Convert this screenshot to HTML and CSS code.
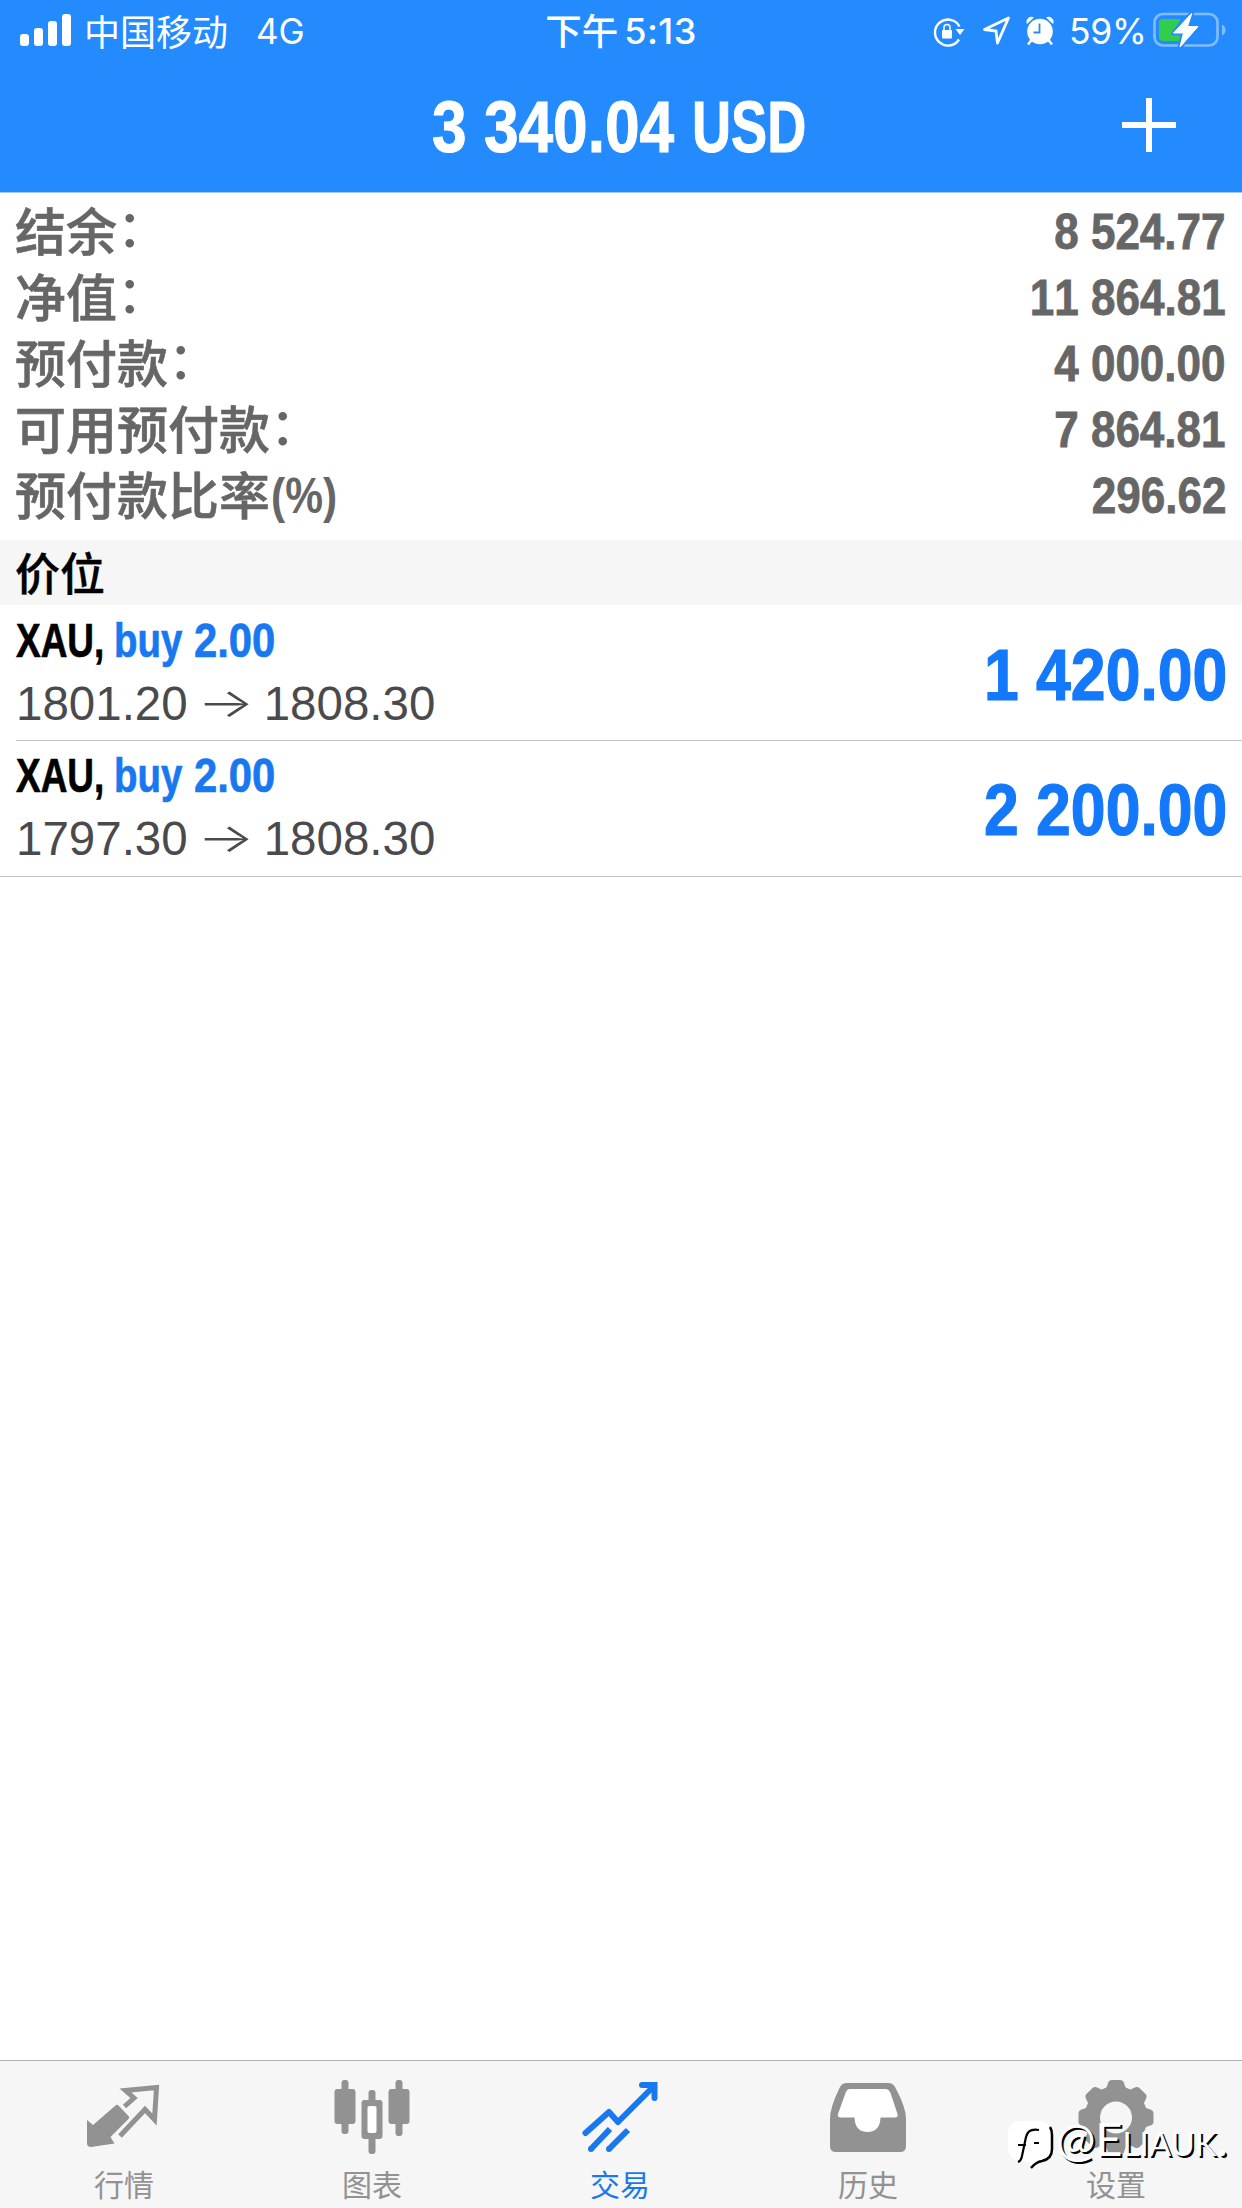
FILE: index.html
```html
<!DOCTYPE html>
<html lang="zh-CN">
<head>
<meta charset="utf-8">
<title>交易</title>
<link rel="stylesheet" href="styles.css">
</head>
<body>
<div class="app">
  <header class="header">
    <div class="status">
      <div class="status-left">
        <svg class="signal" width="52" height="33" viewBox="0 0 52 33" fill="#fff"><rect x="0" y="20" width="9" height="12" rx="3"/><rect x="14" y="14" width="9" height="18" rx="3"/><rect x="28" y="7" width="9" height="25" rx="3"/><rect x="42" y="0" width="9" height="32" rx="3"/></svg>
        <span class="carrier">中国移动</span>
        <span class="network">4G</span>
      </div>
      <div class="clock"><span class="clock-cjk">下午</span><span class="clock-time">5:13</span></div>
      <div class="status-right">
        <svg class="lock" width="32" height="30" viewBox="0 0 32 30" fill="none"><path d="M26.500 9.500A13 13 0 1 0 26 22.500" stroke="#fff" stroke-width="2.400"/><path d="M22.500 12h9l-4.500 6z" fill="#fff"/><rect x="9" y="13" width="10" height="8.500" rx="1" fill="#fff"/><path d="M11 13v-2.500a3 3 0 0 1 6 0V13" stroke="#fff" stroke-width="1.500"/></svg>
        <svg class="location" width="29" height="30" viewBox="0 0 29 30"><path d="M26.500 2 2.500 13.500l11.500 1.500 1.500 12z" fill="none" stroke="#fff" stroke-width="2.800" stroke-linejoin="round"/></svg>
        <svg class="alarm" width="28" height="30" viewBox="0 0 28 30"><circle cx="14" cy="15.500" r="12.800" fill="#fff"/><path d="M1 8a5 5 0 0 1 7-6.500zM27 8a5 5 0 0 0-7-6.500z" fill="#fff"/><path d="m5.500 24-3.500 4.500M22.500 24l3.500 4.500" stroke="#fff" stroke-width="2.500"/><path d="M13.500 7.500v9H7.500" fill="none" stroke="#248bff" stroke-width="1.800"/></svg>
        <span class="percent">59%</span>
        <svg class="battery" width="73" height="38" viewBox="0 0 73 38"><rect x="1.500" y="3" width="63" height="31.500" rx="8.500" fill="none" stroke="#83bdff" stroke-width="2.600"/><path d="M69 13.500v11q3.500-2 3.500-5.500t-3.500-5.500z" fill="#83bdff"/><path d="M10 8h18L20 21h9l-3 9H10q-4 0-4-4V12q0-4 4-4z" fill="#32ce4b"/><path d="M39 2 20.500 22h10L27 36 45 15.500H34.500z" fill="#fff" stroke="#248bff" stroke-width="4.500" stroke-linejoin="round" paint-order="stroke"/><path d="M39 2 20.500 22h10L27 36 45 15.500H34.500z" fill="#fff" stroke="#fff" stroke-linejoin="round"/></svg>
      </div>
    </div>
    <div class="nav">
      <h1 class="title"><span class="title-sum">3 340.04</span><span class="title-currency">USD</span></h1>
      <svg class="add" width="54" height="54" viewBox="0 0 54 54"><path d="M27 0v54M0 27h54" stroke="#fff" stroke-width="6"/></svg>
    </div>
  </header>

  <section class="summary">
    <div class="summary-row"><span class="label">结余</span><span class="colon">：</span><span class="value">8 524.77</span></div>
    <div class="summary-row"><span class="label">净值</span><span class="colon">：</span><span class="value">11 864.81</span></div>
    <div class="summary-row"><span class="label">预付款</span><span class="colon">：</span><span class="value">4 000.00</span></div>
    <div class="summary-row"><span class="label">可用预付款</span><span class="colon">：</span><span class="value">7 864.81</span></div>
    <div class="summary-row"><span class="label">预付款比率</span><span class="unit">(%)</span><span class="value">296.62</span></div>
  </section>

  <h2 class="section-title">价位</h2>
  <ul class="positions">
    <li class="position">
      <div class="deal">
        <div class="deal-head"><span class="symbol">XAU,</span><span class="side">buy</span><span class="volume">2.00</span></div>
        <div class="deal-prices"><span>1801.20</span><span class="arrow">→</span><span>1808.30</span></div>
      </div>
      <span class="profit">1 420.00</span>
    </li>
    <li class="position">
      <div class="deal">
        <div class="deal-head"><span class="symbol">XAU,</span><span class="side">buy</span><span class="volume">2.00</span></div>
        <div class="deal-prices"><span>1797.30</span><span class="arrow">→</span><span>1808.30</span></div>
      </div>
      <span class="profit">2 200.00</span>
    </li>
  </ul>

  <nav class="tabs">
    <a class="tab">
      <svg width="76" height="76" viewBox="0 0 76 76"><path d="M29.500 26.500q1.500-1.500 3 0l10 10.500q1.500 1.500 0 3L24.500 58l4 6.500L5 68q-4 0-4-4V41l6 5z" fill="#929292"/><path d="m38.500 27.500 9.500-8.500-8.500-7.500 31-3-2 32-9.500-10L34 57" fill="none" stroke="#929292" stroke-width="5"/></svg>
      <span>行情</span>
    </a>
    <a class="tab">
      <svg width="76" height="76" viewBox="0 0 76 76"><g fill="#929292"><rect x="7.500" y="1" width="7" height="54" rx="3"/><rect x=".500" y="10" width="21" height="35" rx="3"/><rect x="61.500" y="1" width="7" height="56" rx="3"/><rect x="54.500" y="10" width="21" height="35" rx="3"/><rect x="34.500" y="11" width="7" height="64" rx="3"/><rect x="27.500" y="21" width="21" height="39" rx="3"/></g><rect x="33.500" y="27" width="9" height="27" rx="2" fill="#fff"/></svg>
      <span>图表</span>
    </a>
    <a class="tab active">
      <svg width="76" height="76" viewBox="0 0 76 76" fill="none" stroke="#1878f0" stroke-width="6"><path d="M3.500 54 27 33l9 10L72 7" stroke-linecap="round" stroke-linejoin="round"/><path d="M60 6h12.500v13" stroke-linecap="round"/><path d="M28 50 9 70M46 51 27 70"/><circle cx="9" cy="70" r="1.500" stroke-width="3"/><circle cx="27" cy="70" r="1.500" stroke-width="3"/></svg>
      <span>交易</span>
    </a>
    <a class="tab">
      <svg width="76" height="76" viewBox="0 0 76 76"><path d="M17 4h41q5 0 7 4 11 20 11 32v27q0 6-6 6H6q-6 0-6-6V40Q0 28 10 8q2-4 7-4z" fill="#929292"/><path d="M20 10h35q4 0 5.500 4L67.500 35q1 3.500-3 3.500H50.500Q50 53 37.500 53T24.500 38.500H11q-4 0-3-3.500l7.500-21Q17 10 20 10z" fill="#fff"/></svg>
      <span>历史</span>
    </a>
    <a class="tab">
      <svg width="76" height="76" viewBox="0 0 76 76"><g fill="#929292"><circle cx="38" cy="38.500" r="31.500"/><g id="teeth"><path id="tooth" d="M25 13q3-2 5-9 1-3 4-3h8q3 0 4 3 2 7 5 9z"/><use href="#tooth" transform="rotate(45 38 38.500)"/><use href="#tooth" transform="rotate(90 38 38.500)"/><use href="#tooth" transform="rotate(135 38 38.500)"/></g><use href="#teeth" transform="rotate(180 38 38.500)"/></g><circle cx="38" cy="38.500" r="16" fill="#f6f6f6"/></svg>
      <span>设置</span>
    </a>
  </nav>

  <div class="watermark">
    <svg width="46" height="52" viewBox="0 0 46 52"><path d="M13 0h18Q43 0 43 13v15q0 9-9 11-6 1-10 7-2-6-10-6Q0 39 0 27V13Q0 0 13 0z" fill="#fff"/><path d="M42 6q2 3 2 8v14q0 10-10 12-6 1-11 7" fill="none" stroke="#000" stroke-width="2.500"/><path d="M31 9q-11-2-13 7l-4 19q-1 5-4 6M10 24h8M26 22h5" fill="none" stroke="#000" stroke-width="2.200"/></svg>
    <span>@Eliauk.</span>
  </div>
</div>
</body>
</html>
```
FILE: styles.css
```css
* { box-sizing: border-box; }
body { margin: 0; background: #fff; }
h1, h2, ul { margin: 0; padding: 0; font-size: inherit; font-weight: inherit; list-style: none; }
svg { display: block; flex: none; overflow: visible; }

.app {
  position: relative;
  display: flex;
  flex-direction: column;
  width: 1242px;
  height: 2208px;
  overflow: hidden;
  font-family: "Liberation Sans", "Noto Sans CJK SC", sans-serif;
  font-kerning: none;
  white-space: nowrap;
}

/* Header */
.header { flex: none; height: 193px; background: #248bff; border-bottom: 1px solid #a9c8ee; color: #fff; }
.status { display: grid; grid-template-columns: 1fr auto 1fr; height: 62px; font-family: Inter, sans-serif; font-size: 35px; line-height: 62px; }
.status-left { display: flex; padding-left: 20px; }
.signal { margin-top: 14px; }
.carrier { width: 145px; margin-left: 12px; font: 400 36px/60px "Noto Sans CJK SC", sans-serif; }
.network { margin-left: 27px; }
.clock { display: flex; font-weight: 500; font-size: 36px; }
.clock-cjk { width: 75px; font: 500 36.5px/60px "Noto Sans CJK SC", sans-serif; }
.clock-time { margin-left: 4px; letter-spacing: .5px; }
.status-right { display: flex; justify-content: flex-end; padding-right: 16px; }
.lock { margin: 17px 17px 0 0; }
.location { margin: 16px 15px 0 0; }
.alarm { margin: 16px 15px 0 0; }
.percent { width: 78px; margin-right: 6px; font-size: 35.5px; font-weight: 400; line-height: 63px; letter-spacing: -.3px; }
.battery { margin-top: 11px; }
.nav { display: grid; grid-template-columns: 432px 1fr auto; height: 130px; align-items: center; padding-right: 66px; }
.title { grid-column: 2; display: flex; font-size: 72px; font-weight: 700; line-height: 130px; -webkit-text-stroke: 1px; }
.title-sum { width: 260px; transform: scaleX(.864); transform-origin: left; }
.title-currency { transform: scaleX(.752); transform-origin: left; }
.add { margin-top: -5px; }

/* Account summary */
.summary { flex: none; height: 347px; padding: 6px 16px 11px; color: #666; }
.summary-row { display: flex; height: 66px; line-height: 66px; }
.label { margin-left: -1px; font: 500 51px/60px "Noto Sans CJK SC", sans-serif; -webkit-text-stroke: .6px; }
.colon { font: 500 51px/53px "Noto Sans CJK SC", sans-serif; }
.unit { margin-left: 1px; font-size: 50px; font-weight: 700; transform: scaleX(.85); transform-origin: left; }
.value { margin-left: auto; font-size: 50.5px; font-weight: 700; transform: scaleX(.872); transform-origin: right; -webkit-text-stroke: .8px; }

/* Positions */
.section-title { flex: none; height: 65px; padding-left: 15px; background: #f6f6f6; color: #000; font: 500 45px/63px "Noto Sans CJK SC", sans-serif; -webkit-text-stroke: .4px; }
.position { display: flex; justify-content: space-between; height: 136px; margin-left: 16px; padding: 4px 15px 0 0; border-bottom: 1px solid #c2c2c4; font-size: 48px; line-height: 63px; }
.position:last-child { margin-left: 0; padding-left: 16px; padding-top: 3px; }
.deal-head { display: flex; font-weight: 700; -webkit-text-stroke: .7px; }
.deal-head span { transform-origin: left; }
.symbol { width: 98px; color: #000; transform: scaleX(.77); }
.side { width: 80px; color: #1878f0; transform: scaleX(.8); }
.volume { color: #1878f0; transform: scaleX(.87); }
.deal-prices { display: flex; color: #4a4a4c; font-size: 47.5px; }
.arrow { width: 76px; font: 300 40px/61px Inter, sans-serif; text-align: center; transform: scaleX(1.5); }
.profit { color: #1478fa; font-size: 72px; font-weight: 700; line-height: 132px; transform: scaleX(.868); transform-origin: right; -webkit-text-stroke: 1.2px; }

/* Tab bar */
.tabs { display: grid; grid-template-columns: repeat(5, 248px); height: 148px; margin-top: auto; border-top: 1px solid #b2b2b2; background: #f6f6f6; color: #929292; }
.tab { display: flex; flex-direction: column; align-items: center; padding-top: 18px; font: 400 30px/42px "Noto Sans CJK SC", sans-serif; }
.tab span { margin-top: 7px; }
.active { color: #1878f0; }

/* Author mark lies over the tab bar */
.watermark { position: absolute; left: 1008px; top: 2121px; display: flex; color: #fff; }
.watermark span { margin-left: 2px; font: 400 47px/34px Lato, sans-serif; font-variant: small-caps; text-shadow: 2px 2px 0 #000; }
```
